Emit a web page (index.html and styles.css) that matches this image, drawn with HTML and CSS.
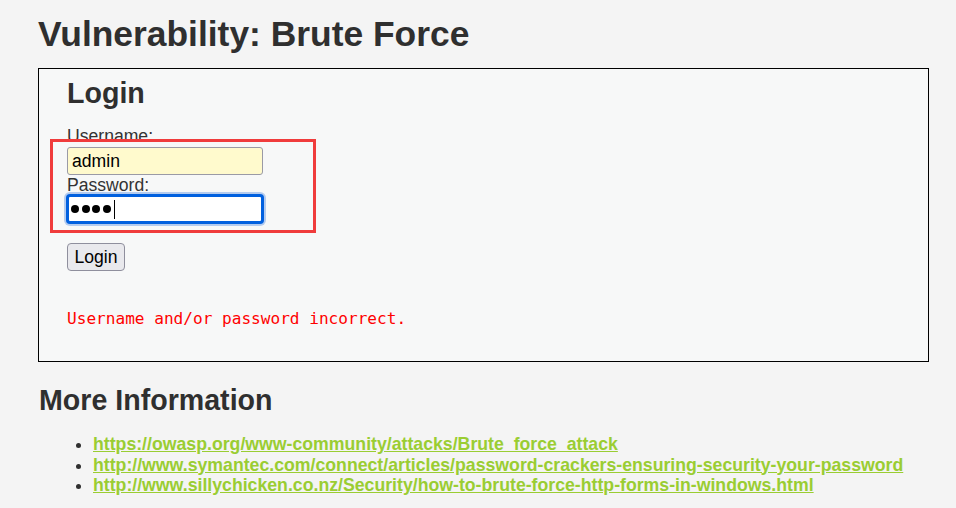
FILE: index.html
```html
<!DOCTYPE html>
<html>
<head>
<meta charset="utf-8">
<link rel="stylesheet" href="styles.css">
</head>
<body>
<div class="page">
  <h1 class="title">Vulnerability: Brute Force</h1>
  <div class="vulnerable_code_area">
    <h2 class="login-title">Login</h2>
    <form class="login-form">
      <label class="lbl">Username:</label>
      <input class="field user" type="text" value="admin">
      <label class="lbl">Password:</label>
      <div class="field pass"><span class="dot"></span><span class="dot"></span><span class="dot"></span><span class="dot"></span><span class="caret"></span></div>
      <button class="btn" type="button">Login</button>
    </form>
    <pre class="error">Username and/or password incorrect.</pre>
    <div class="annot"></div>
  </div>
  <h2 class="more">More Information</h2>
  <ul class="links">
    <li><a href="#">https://owasp.org/www-community/attacks/Brute_force_attack</a></li>
    <li><a href="#">http://www.symantec.com/connect/articles/password-crackers-ensuring-security-your-password</a></li>
    <li><a href="#">http://www.sillychicken.co.nz/Security/how-to-brute-force-http-forms-in-windows.html</a></li>
  </ul>
</div>
</body>
</html>
```
FILE: styles.css
```css
html, body { margin: 0; padding: 0; }
body {
  background: #f4f4f4;
  font-family: "Liberation Sans", Arial, sans-serif;
  color: #2f2f2f;
  width: 956px;
  height: 508px;
  overflow: hidden;
}
.page { padding: 0 27px 0 38px; }
.title {
  margin: 0;
  padding-top: 14px;
  font-size: 35.4px;
  line-height: 40px;
  font-weight: bold;
}
.vulnerable_code_area {
  position: relative;
  margin-top: 14px;
  border: 1px solid #000;
  background: #f7f8f8;
  padding: 7px 28px 0 28px;
  height: 285px;
}
.login-title {
  margin: 0;
  font-size: 28.6px;
  line-height: 34px;
  font-weight: bold;
}
.login-form {
  display: flex;
  flex-direction: column;
  align-items: flex-start;
  margin-top: 17px;
}
.lbl { font-size: 17.6px; line-height: 19px; color: #333; }
.field {
  box-sizing: border-box;
  width: 196px;
  height: 28px;
  border-radius: 3px;
  font-family: "Liberation Sans", Arial, sans-serif;
  font-size: 17.6px;
}
.user {
  margin-top: 1px;
  margin-bottom: 1px;
  background: #fffacd;
  border: 1px solid #9a9aa6;
  padding: 0 4px;
  color: #000;
  outline: none;
}
.pass {
  background: #fff;
  border: 2px solid #0060df;
  box-shadow: 0 0 0 1px #0060df, 0 0 0 3px #b3cbef;
  display: flex;
  align-items: center;
  gap: 2.5px;
  padding: 0 0 0 2px;
}
.dot {
  width: 8px;
  height: 8px;
  border-radius: 50%;
  background: #000;
}
.caret { width: 1px; height: 19px; background: #000; margin-left: 1px; }
.btn {
  margin-top: 20px;
  box-sizing: border-box;
  width: 58px;
  height: 28px;
  padding: 0;
  font-family: "Liberation Sans", Arial, sans-serif;
  font-size: 17.6px;
  color: #000;
  background: #e9e9ed;
  border: 1px solid #8f8f9d;
  border-radius: 4px;
}
.error {
  margin: 38px 0 0 0;
  font-family: "DejaVu Sans Mono", "Liberation Mono", monospace;
  font-size: 16.1px;
  line-height: 20px;
  color: #ff0000;
}
.annot {
  position: absolute;
  left: 11px;
  top: 70px;
  width: 260px;
  height: 88px;
  border: 3px solid #f03c3c;
}
.more {
  margin: 21px 0 0 1px;
  font-size: 28.6px;
  line-height: 34px;
  font-weight: bold;
}
.links {
  margin: 17px 0 0 0;
  padding-left: 55px;
  font-size: 17.7px;
  line-height: 20.5px;
  font-weight: bold;
}
.links li::marker { color: #2f2f2f; }
.links a { color: #9acd32; text-decoration: underline; }
```
